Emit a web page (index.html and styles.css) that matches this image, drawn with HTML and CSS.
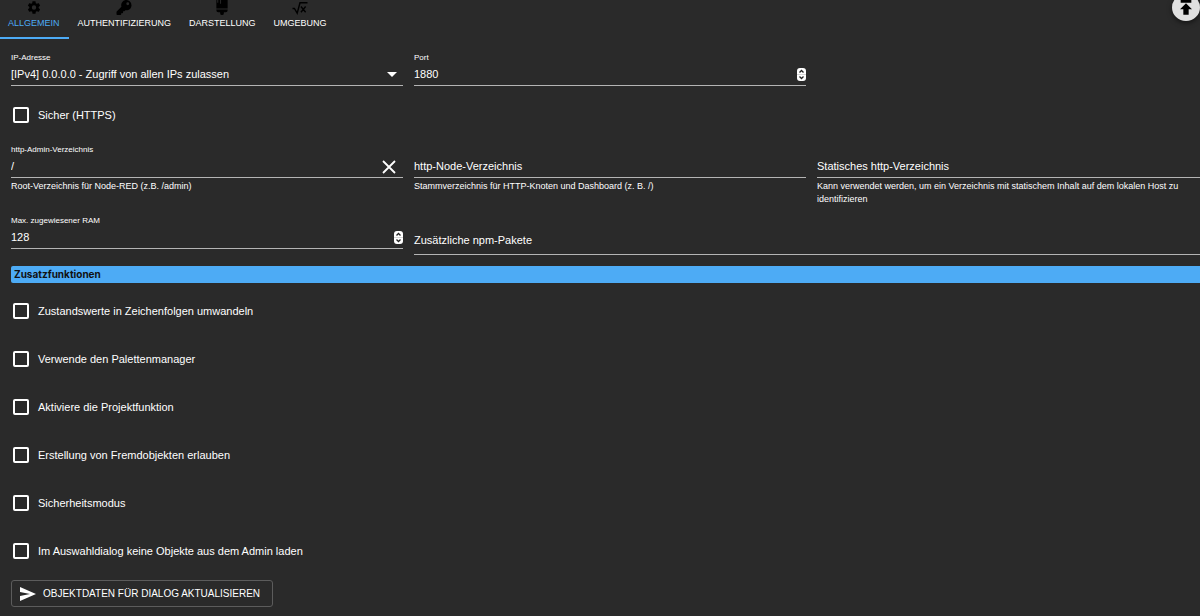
FILE: index.html
```html
<!DOCTYPE html>
<html lang="de">
<head>
<meta charset="utf-8">
<meta name="viewport" content="width=device-width, initial-scale=1">
<title>Node-RED – Einstellungen</title>
<link rel="stylesheet" href="styles.css">
</head>
<body>
<nav class="tabs" role="tablist">
  <button class="tab tab-active" role="tab" aria-selected="true" type="button">
    <svg class="tab-icon" viewBox="0 0 24 24"><path d="M12 15.500A3.500 3.500 0 0 1 8.500 12 3.500 3.500 0 0 1 12 8.500a3.500 3.500 0 0 1 3.500 3.500 3.500 3.500 0 0 1-3.500 3.500m7.430-2.530c.04-.32.07-.64.07-.97s-.03-.66-.07-1l2.110-1.630c.19-.15.24-.42.12-.64l-2-3.460c-.12-.22-.39-.31-.61-.22l-2.490 1c-.52-.39-1.060-.73-1.690-.98l-.37-2.650A.506.506 0 0 0 14 2h-4c-.25 0-.46.18-.5.42l-.37 2.650c-.63.25-1.170.59-1.690.98l-2.490-1c-.22-.09-.49 0-.61.22l-2 3.460c-.13.22-.07.49.12.64L4.570 11c-.04.34-.07.67-.07 1s.03.65.07.97l-2.110 1.660c-.19.15-.25.42-.12.64l2 3.460c.12.22.39.3.61.22l2.490-1.010c.52.4 1.060.74 1.690.99l.37 2.650c.04.24.25.42.5.42h4c.25 0 .46-.18.5-.42l.37-2.650c.63-.26 1.170-.59 1.690-.99l2.490 1.010c.22.08.49 0 .61-.22l2-3.460c.12-.22.07-.49-.12-.64z"/></svg>
    <span>ALLGEMEIN</span>
  </button>
  <button class="tab" role="tab" aria-selected="false" type="button">
    <svg class="tab-icon" viewBox="0 0 512 512"><path d="M512 176c0 97-79 176-176 176-11 0-22-1-33-3l-24 27a24 24 0 0 1-18 8h-37v40a24 24 0 0 1-24 24h-40v40a24 24 0 0 1-24 24H24a24 24 0 0 1-24-24v-78c0-6 3-12 7-17l162-162a176 176 0 1 1 343-55zM336 128a48 48 0 1 0 96 0 48 48 0 1 0-96 0z"/></svg>
    <span>AUTHENTIFIZIERUNG</span>
  </button>
  <button class="tab" role="tab" aria-selected="false" type="button">
    <svg class="tab-icon" viewBox="0 0 16 16"><path d="M2 0h1v3h1V0h2v4h1V0h7v9H2zM2 10h12v1a2 2 0 0 1-2 2h-2v1a2 2 0 0 1-4 0v-1H4a2 2 0 0 1-2-2z"/></svg>
    <span>DARSTELLUNG</span>
  </button>
  <button class="tab" role="tab" aria-selected="false" type="button">
    <svg class="tab-icon" viewBox="0 0 16 16"><path d="M0 9h2l3 5L8 3h8M9 7l5 6M14 7l-5 6" fill="none" stroke="currentColor" stroke-width="1.500"/></svg>
    <span>UMGEBUNG</span>
  </button>
</nav>

<button class="upload" type="button" aria-label="Nach oben">
  <svg viewBox="0 0 24 24"><path d="M4 0h16v4H4zM12 5l9 9h-5v8H8v-8H3z"/></svg>
</button>

<main class="panel">
  <form class="form">
    <div class="row">
      <div class="field">
        <label class="label" for="ip">IP-Adresse</label>
        <div class="control">
          <select class="input" id="ip"><option>[IPv4] 0.0.0.0 - Zugriff von allen IPs zulassen</option></select>
          <svg class="arrow" viewBox="0 0 10 5"><path d="M0 0h10L5 5z"/></svg>
        </div>
      </div>
      <div class="field">
        <label class="label" for="port">Port</label>
        <div class="control">
          <input class="input" id="port" type="number" value="1880">
          <svg class="spin" viewBox="0 0 9 13"><rect width="9" height="13" rx="3" fill="#fff"/><path d="M0 6.500h9" stroke="#bbb" stroke-width=".6"/><path d="M2.500 4.500l2-2 2 2M2.500 8.500l2 2 2-2" fill="none" stroke="#222" stroke-width="1.300"/></svg>
        </div>
      </div>
    </div>

    <label class="check check-secure"><input class="box" type="checkbox">Sicher (HTTPS)</label>

    <div class="row">
      <div class="field">
        <label class="label" for="admin">http-Admin-Verzeichnis</label>
        <div class="control">
          <input class="input" id="admin" type="text" value="/">
          <button class="clear" type="button" aria-label="Leeren"><svg viewBox="0 0 14 14"><path d="M1 1l12 12M13 1L1 13" stroke="currentColor" stroke-width="1.800"/></svg></button>
        </div>
        <p class="help">Root-Verzeichnis für Node-RED (z.B. /admin)</p>
      </div>
      <div class="field field-empty">
        <div class="control">
          <input class="input" id="node" type="text">
          <label class="float" for="node">http-Node-Verzeichnis</label>
        </div>
        <p class="help">Stammverzeichnis für HTTP-Knoten und Dashboard (z. B. /)</p>
      </div>
      <div class="field field-empty">
        <div class="control">
          <input class="input" id="static" type="text">
          <label class="float" for="static">Statisches http-Verzeichnis</label>
        </div>
        <p class="help">Kann verwendet werden, um ein Verzeichnis mit statischem Inhalt auf dem lokalen Host zu identifizieren</p>
      </div>
    </div>

    <div class="row row-packages">
      <div class="field">
        <label class="label" for="ram">Max. zugewiesener RAM</label>
        <div class="control">
          <input class="input" id="ram" type="number" value="128">
          <svg class="spin" viewBox="0 0 9 13"><rect width="9" height="13" rx="3" fill="#fff"/><path d="M0 6.500h9" stroke="#bbb" stroke-width=".6"/><path d="M2.500 4.500l2-2 2 2M2.500 8.500l2 2 2-2" fill="none" stroke="#222" stroke-width="1.300"/></svg>
        </div>
      </div>
      <div class="field field-chips">
        <div class="control">
          <input class="input" id="npm" type="text">
          <label class="float" for="npm">Zusätzliche npm-Pakete</label>
        </div>
      </div>
    </div>

    <h2 class="section">Zusatzfunktionen</h2>

    <div class="checks">
      <label class="check"><input class="box" type="checkbox">Zustandswerte in Zeichenfolgen umwandeln</label>
      <label class="check"><input class="box" type="checkbox">Verwende den Palettenmanager</label>
      <label class="check"><input class="box" type="checkbox">Aktiviere die Projektfunktion</label>
      <label class="check"><input class="box" type="checkbox">Erstellung von Fremdobjekten erlauben</label>
      <label class="check"><input class="box" type="checkbox">Sicherheitsmodus</label>
      <label class="check"><input class="box" type="checkbox">Im Auswahldialog keine Objekte aus dem Admin laden</label>
    </div>

    <button class="action" type="button">
      <svg viewBox="0 0 16 14"><path d="M0 0l16 7L0 14V9l10-2L0 5z"/></svg>
      OBJEKTDATEN FÜR DIALOG AKTUALISIEREN
    </button>
  </form>
</main>
</body>
</html>
```
FILE: styles.css
```css
* {
  box-sizing: border-box;
}

body {
  margin: 0;
  background: #2a2a2a;
  color: #fff;
  font: 11px "Liberation Sans", Arial, sans-serif;
  overflow: hidden;
}

button,
input,
select {
  font: inherit;
  color: inherit;
}

.tabs {
  display: flex;
  height: 39px;
}

.tab {
  display: flex;
  flex-direction: column;
  align-items: center;
  justify-content: flex-start;
  padding: 0 9px;
  border: 0;
  border-bottom: 2px solid transparent;
  background: none;
  font-size: 9px;
  line-height: 16px;
}

.tab:first-child {
  padding-left: 8px;
}

.tab-active {
  color: #4dabf5;
  border-bottom-color: #4dabf5;
}

.tab-icon {
  width: 16px;
  height: 15px;
  color: #000;
  fill: #000;
}

.upload {
  position: absolute;
  top: -6px;
  right: 0;
  width: 28px;
  height: 27px;
  padding: 0;
  border: 0;
  border-radius: 50%;
  background: #e0e0e0;
  box-shadow: 0 2px 5px #0008;
}

.upload svg {
  display: block;
  width: 16px;
  height: 16px;
  margin: auto;
}

.panel {
  padding: 12px 0 0 11px;
}

.form {
  margin-right: -9px;
}

.row {
  display: grid;
  grid-template-columns: repeat(3, 1fr);
  gap: 11px;
}

.row-packages {
  margin-top: 8px;
}

.field-empty {
  padding-top: 13px;
}

.field-chips {
  grid-column: span 2;
  padding-top: 16px;
}

.field-chips .control {
  padding-bottom: 3px;
}

.label {
  display: block;
  font-size: 8px;
  line-height: 13px;
}

.control {
  position: relative;
  display: flex;
  align-items: center;
  border-bottom: 1px solid #b4b4b4;
}

.input {
  appearance: none;
  flex: 1;
  min-width: 0;
  height: 21px;
  margin: 0;
  padding: 0 0 2px;
  border: 0;
  outline: 0;
  background: none;
}

.input[type="number"] {
  appearance: textfield;
}

.float {
  position: absolute;
  left: 0;
  top: 0;
  line-height: 21px;
}

.arrow {
  width: 10px;
  height: 5px;
  margin-right: 6px;
  fill: #fff;
}

.spin {
  width: 9px;
  height: 13px;
}

.clear {
  display: flex;
  margin-right: 7px;
  padding: 0;
  border: 0;
  background: none;
}

.clear svg {
  width: 14px;
  height: 14px;
}

.help {
  margin: 2px 0 0;
  font-size: 9px;
  line-height: 13px;
}

.section {
  margin: 11px 0 4px;
  padding-left: 3px;
  border-radius: 2px;
  background: #4dabf5;
  color: #111;
  font: bold 10px/17px Inter, "Noto Sans", sans-serif;
}

.checks {
  display: flex;
  flex-direction: column;
}

.check {
  display: flex;
  align-items: center;
  gap: 9px;
  height: 48px;
  padding-left: 2px;
}

.check-secure {
  height: 57px;
}

.box {
  appearance: none;
  width: 16px;
  height: 16px;
  margin: 0;
  border: 2px solid #fff;
  border-radius: 2px;
}

.action {
  display: flex;
  align-items: center;
  gap: 7px;
  height: 27px;
  margin-top: 5px;
  padding: 0 12px 0 8px;
  border: 1px solid #5c5c5c;
  border-radius: 3px;
  background: none;
  font-size: 10px;
}

.action svg {
  width: 16px;
  height: 14px;
  fill: #fff;
}
```
